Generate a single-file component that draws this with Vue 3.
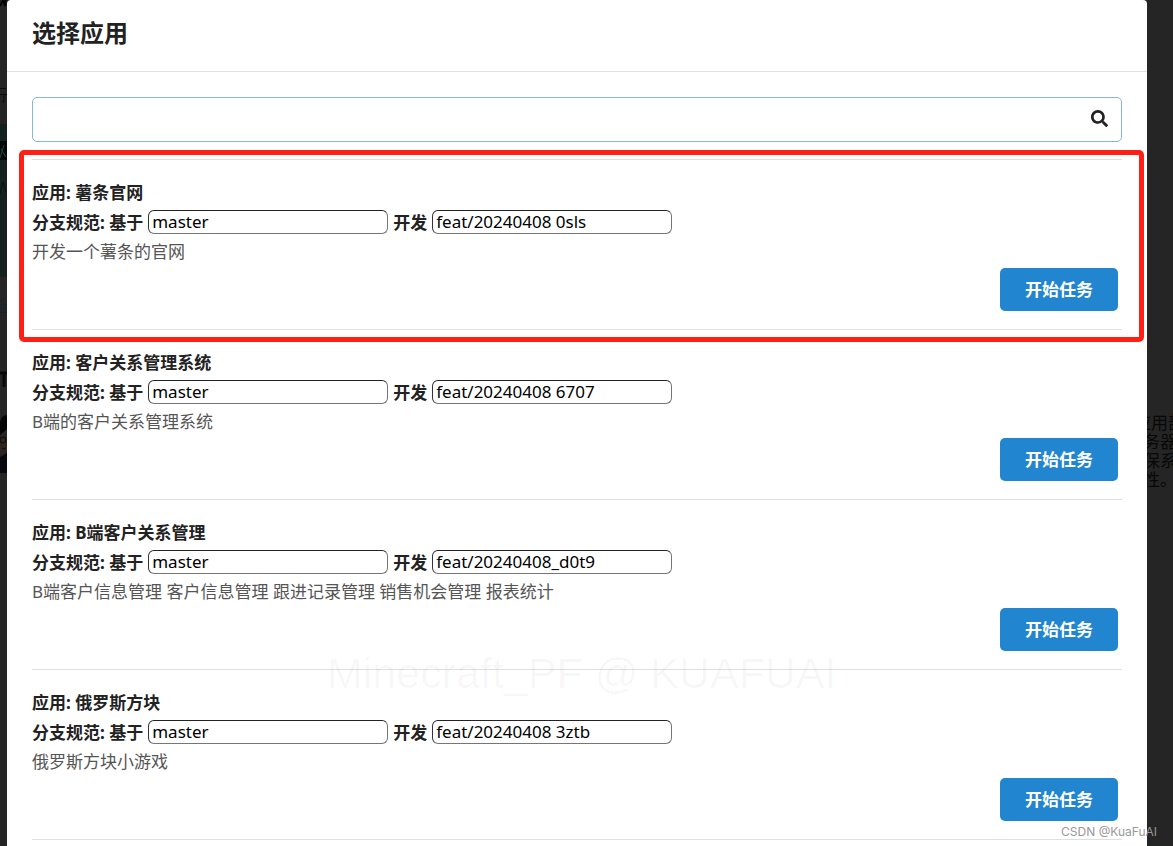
<script setup>
import { ref } from 'vue'

const keyword = ref('')
const apps = ref([
  { id: 1, name: '薯条官网', base: 'master', branch: 'feat/20240408 0sls', desc: '开发一个薯条的官网', marked: true },
  { id: 2, name: '客户关系管理系统', base: 'master', branch: 'feat/20240408 6707', desc: 'B端的客户关系管理系统' },
  { id: 3, name: 'B端客户关系管理', base: 'master', branch: 'feat/20240408_d0t9', desc: 'B端客户信息管理 客户信息管理 跟进记录管理 销售机会管理 报表统计' },
  { id: 4, name: '俄罗斯方块', base: 'master', branch: 'feat/20240408 3ztb', desc: '俄罗斯方块小游戏' }
])
</script>

<template>
  <div class="page">
    <div class="behind" aria-hidden="true">
      <div class="side-panel"></div>
      <div class="side-badge"></div>
      <svg class="side-art" width="7" height="340" viewBox="0 0 7 340">
        <path d="M0 6 L3 0 L5 6 M5.500 0 V6" stroke="#050505" stroke-width="2" fill="none" />
        <path d="M0 88.500 H6 M0 94.500 H7 M4 95 V102 H2" stroke="#0c0c0c" fill="none" />
        <path d="M0 158 L4 145 M1 149 L6 157" stroke="#27433e" fill="none" />
        <path d="M0 194 L3 182 L6 192" stroke="#091210" fill="none" />
        <path d="M0 301 L6 298 M0 304.500 H7 M0 308.500 H7 M0 312.500 H7" stroke="#142238" fill="none" />
      </svg>
      <svg class="side-avatar" width="7" height="106" viewBox="0 0 7 106">
        <path d="M0 2 H7 M4 2 V16" stroke="#090909" stroke-width="3" />
        <path d="M7 44 Q0 44 0 54 V64 L7 58 Z" fill="#050505" />
        <path d="M0 67 L7 63 V83 H0 Z" fill="#2d231e" />
        <circle cx="3" cy="69" r="3" stroke="#080808" fill="none" />
        <path d="M2 77 Q4 79 6 77" stroke="#0a0808" fill="none" />
        <path d="M0 86 L7 82 V102 H0 Z" fill="#08090d" />
      </svg>
      <p class="side-text">应用部<br />务器<br />保系<br />性。</p>
    </div>

    <main class="modal">
      <header class="modal-header">
        <h1>选择应用</h1>
      </header>
      <div class="modal-body">
        <div class="search">
          <input v-model="keyword" type="text" aria-label="搜索应用" />
          <button type="button" aria-label="搜索">
            <svg width="17" height="17" viewBox="0 0 512 512">
              <path fill="#222" d="M505 442.700L405.300 343c-4.500-4.500-10.600-7-17-7H372c27.600-35.300 44-79.700 44-128C416 93.100 322.900 0 208 0S0 93.100 0 208s93.100 208 208 208c48.300 0 92.700-16.400 128-44v16.300c0 6.400 2.500 12.500 7 17l99.700 99.700c9.400 9.400 24.600 9.400 33.900 0l28.300-28.300c9.400-9.400 9.400-24.600.1-34zM208 336c-70.700 0-128-57.200-128-128 0-70.700 57.200-128 128-128 70.700 0 128 57.200 128 128 0 70.700-57.200 128-128 128z" />
            </svg>
          </button>
        </div>

        <section v-for="app in apps" :key="app.id" class="item" :class="{ marked: app.marked }">
          <h2>应用: {{ app.name }}</h2>
          <div class="branch">
            <label :for="'base-' + app.id">分支规范: 基于</label>
            <input :id="'base-' + app.id" v-model="app.base" type="text" />
            <label :for="'dev-' + app.id">开发</label>
            <input :id="'dev-' + app.id" v-model="app.branch" type="text" />
          </div>
          <p>{{ app.desc }}</p>
          <button type="button" class="start">开始任务</button>
        </section>
      </div>
      <div class="watermark">Minecraft_PF @ KUAFUAI</div>
    </main>
    <div class="credit">CSDN @KuaFuAI</div>
  </div>
</template>

<style>
body {
  background: #252525;
}
</style>

<style scoped>
* {
  box-sizing: border-box;
}

.page {
  position: relative;
  min-height: 100vh;
  padding: 0 26px 0 7px;
  overflow: hidden;
  background: #252525;
  color: #222;
  font-family: "Noto Sans", "Noto Sans CJK SC", sans-serif;
  font-size: 17px;
}

.side-panel {
  position: absolute;
  left: 0;
  top: 124px;
  width: 7px;
  height: 153px;
  background: #14211f;
}

.side-badge {
  position: absolute;
  left: 0;
  top: 141px;
  width: 7px;
  height: 19px;
  background: #050808;
}

.side-art {
  position: absolute;
  left: 0;
  top: 0;
}

.side-avatar {
  position: absolute;
  left: 0;
  top: 371px;
}

.side-text {
  position: absolute;
  left: 1143px;
  top: 413px;
  margin: 0;
  color: #080808;
  font-size: 17px;
  line-height: 19px;
  text-indent: -9px;
  white-space: nowrap;
}

.modal {
  position: relative;
  min-height: 100vh;
  background: #fff;
  border-radius: 4px 4px 0 0;
}

.modal-header {
  padding: 15px 25px 20px;
  border-bottom: 1px solid #dedfdf;
}

h1 {
  margin: 0;
  font-size: 24px;
  line-height: 36px;
}

.modal-body {
  padding: 25px 25px 0;
}

.search {
  display: flex;
  height: 45px;
  margin-bottom: 17px;
  border: 1px solid #85b7d9;
  border-radius: 5px;
}

.search input {
  flex: 1;
  min-width: 0;
  padding: 0 16px;
  border: 0;
  outline: 0;
  background: transparent;
  font: inherit;
}

.search button {
  display: flex;
  align-items: center;
  justify-content: center;
  width: 44px;
  padding: 0 0 2px;
  border: 0;
  background: transparent;
}

.item {
  position: relative;
  display: flex;
  flex-direction: column;
  padding: 18px 4px 18px 0;
  border-top: 1px solid #dedfdf;
}

.item:last-child {
  border-bottom: 1px solid #dedfdf;
}

.item.marked::after {
  content: "";
  position: absolute;
  inset: -10px -22px -13px -13px;
  border: 5px solid #ff1f14;
  border-radius: 5px;
  pointer-events: none;
  z-index: 1;
}

h2 {
  margin: 0;
  font-size: 17px;
  line-height: 30px;
}

.branch {
  display: flex;
  align-items: center;
  gap: 5px;
  height: 28px;
  font-weight: 700;
}

.branch label {
  padding-bottom: 1px;
}

.branch input {
  width: 240px;
  height: 24px;
  padding: 0 3px 2px;
  border: 1px solid #767676;
  border-top-color: #222;
  border-left-color: #333;
  border-radius: 6px;
  background: #fff;
  color: #000;
  font: 400 17px "Noto Sans", sans-serif;
}

.item p {
  margin: 0;
  color: #555;
  line-height: 32px;
}

.start {
  align-self: flex-end;
  width: 118px;
  height: 43px;
  padding: 0 0 3px;
  border: 0;
  border-radius: 5px;
  background: #2185d0;
  color: #fff;
  font: inherit;
  font-weight: 700;
}

.watermark {
  position: absolute;
  left: 320px;
  top: 648px;
  color: rgba(0, 0, 0, 0.035);
  font: 43px/50px "Liberation Sans", sans-serif;
  white-space: nowrap;
  pointer-events: none;
}

.credit {
  position: absolute;
  right: 16px;
  bottom: 6px;
  color: #999;
  font: 12px/16px Inter, sans-serif;
}
</style>
